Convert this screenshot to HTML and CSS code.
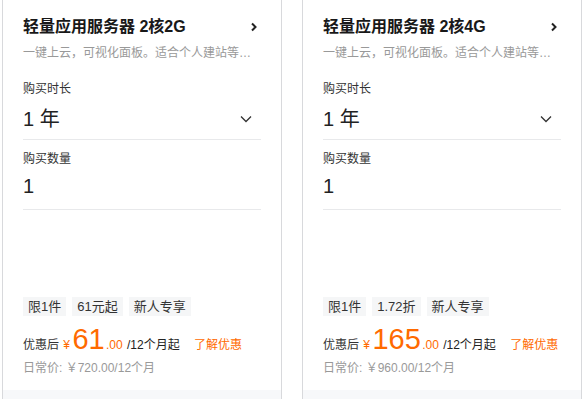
FILE: index.html
```html
<!DOCTYPE html>
<html lang="zh-CN">
  <head>
    <meta charset="UTF-8" />
    <title>轻量应用服务器</title>
    <link rel="stylesheet" href="styles.css">
  </head>
  <body>
    <div class="cards">
      <div class="card">
        <div class="card-body">
          <div class="card-head">
            <div class="card-title">轻量应用服务器 2核2G</div>
            <svg class="arrow-right" width="8" height="10" viewBox="0 0 8 10"><path d="M2 1.5 L5.5 5 L2 8.5" fill="none" stroke="#222" stroke-width="2"/></svg>
          </div>
          <div class="card-desc">一键上云，可视化面板。适合个人建站等…</div>

          <div class="field field-select">
            <div class="field-label">购买时长</div>
            <div class="field-value">
              <span>1 年</span>
              <svg class="arrow-down" width="12" height="8" viewBox="0 0 12 8"><path d="M1 1.5 L6 6.5 L11 1.5" fill="none" stroke="#333" stroke-width="1.3"/></svg>
            </div>
          </div>
          <div class="field field-count">
            <div class="field-label">购买数量</div>
            <div class="field-value"><span>1</span></div>
          </div>

          <div class="tags">
            <span class="tag">限1件</span>
            <span class="tag">61元起</span>
            <span class="tag">新人专享</span>
          </div>
          <div class="price">
            <span class="price-label">优惠后</span>
            <span class="price-yen">¥</span>
            <span class="price-num">61</span>
            <span class="price-dec">.00</span>
            <span class="price-unit">/12个月起</span>
            <a class="price-link">了解优惠</a>
          </div>
          <div class="price-old">日常价: ￥720.00/12个月</div>
        </div>
        <div class="card-foot"></div>
      </div>

      <div class="card">
        <div class="card-body">
          <div class="card-head">
            <div class="card-title">轻量应用服务器 2核4G</div>
            <svg class="arrow-right" width="8" height="10" viewBox="0 0 8 10"><path d="M2 1.5 L5.5 5 L2 8.5" fill="none" stroke="#222" stroke-width="2"/></svg>
          </div>
          <div class="card-desc">一键上云，可视化面板。适合个人建站等…</div>

          <div class="field field-select">
            <div class="field-label">购买时长</div>
            <div class="field-value">
              <span>1 年</span>
              <svg class="arrow-down" width="12" height="8" viewBox="0 0 12 8"><path d="M1 1.5 L6 6.5 L11 1.5" fill="none" stroke="#333" stroke-width="1.3"/></svg>
            </div>
          </div>
          <div class="field field-count">
            <div class="field-label">购买数量</div>
            <div class="field-value"><span>1</span></div>
          </div>

          <div class="tags">
            <span class="tag">限1件</span>
            <span class="tag">1.72折</span>
            <span class="tag">新人专享</span>
          </div>
          <div class="price">
            <span class="price-label">优惠后</span>
            <span class="price-yen">¥</span>
            <span class="price-num">165</span>
            <span class="price-dec">.00</span>
            <span class="price-unit">/12个月起</span>
            <a class="price-link">了解优惠</a>
          </div>
          <div class="price-old">日常价: ￥960.00/12个月</div>
        </div>
        <div class="card-foot"></div>
      </div>
    </div>
  </body>
</html>
```

FILE: styles.css
```css
* {
  margin: 0;
  padding: 0;
  box-sizing: border-box;
}
body {
  background: #fff;
  font-family: "Liberation Sans", Arial, "Noto Sans CJK SC", sans-serif;
  color: #333;
  overflow: hidden;
}
.cards {
  display: flex;
  gap: 20px;
  padding-left: 2px;
}
.card {
  width: 280px;
  border: 1px solid #d8d9dc;
  border-top: none;
  display: flex;
  flex-direction: column;
}
.card-body {
  padding: 15px 20px 13px;
}
.card-head {
  display: flex;
  justify-content: space-between;
  align-items: center;
  height: 24px;
}
.card-title {
  font-size: 16px;
  font-weight: bold;
  color: #181818;
  line-height: 24px;
}
.arrow-right {
  margin-right: 3px;
}
.card-desc {
  margin-top: 5px;
  font-size: 12px;
  line-height: 18px;
  color: #999;
  white-space: nowrap;
}
.field {
  border-bottom: 1px solid #e8e9eb;
}
.field-label {
  font-size: 12px;
  line-height: 18px;
  color: #333;
}
.field-value {
  display: flex;
  justify-content: space-between;
  align-items: center;
  font-size: 20px;
  line-height: 28px;
  color: #222;
}
.arrow-down {
  margin-right: 9px;
}
.field-select {
  margin-top: 18px;
  padding-bottom: 6px;
}
.field-select .field-value {
  margin-top: 7px;
}
.field-count {
  margin-top: 10px;
  padding-bottom: 9px;
}
.field-count .field-value {
  margin-top: 4px;
}
.tags {
  display: flex;
  gap: 6px;
  margin-top: 87px;
}
.tag {
  background: #f5f6f7;
  font-size: 13px;
  line-height: 19px;
  padding: 0 5px;
  color: #333;
}
.price {
  margin-top: 7px;
  line-height: 32px;
  height: 32px;
  white-space: nowrap;
  font-size: 12px;
}
.price-label {
  color: #333;
}
.price-yen {
  color: #ff6a00;
  margin-left: 1px;
}
.price-num {
  color: #ff6a00;
  font-size: 29px;
  margin-left: -1px;
}
.price-dec {
  color: #ff6a00;
  margin-left: -2px;
}
.price-unit {
  color: #222;
  margin-left: 1px;
}
.price-link {
  color: #ff6a00;
  margin-left: 11px;
  cursor: pointer;
}
.price-old {
  margin-top: 4px;
  font-size: 12px;
  line-height: 18px;
  color: #999;
}
.card-foot {
  background: #f7f8fa;
  height: 40px;
}
```
